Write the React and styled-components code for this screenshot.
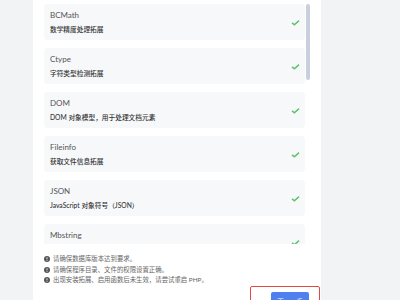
import React from 'react'
import styled, { createGlobalStyle } from 'styled-components'

const Global = createGlobalStyle`
  html, body {
    margin: 0;
    padding: 0;
    background: #f2f3f5;
    font-family: Lato, "Noto Sans CJK SC", sans-serif;
  }
`

const Page = styled.div`
  display: flex;
  height: 300px;
  padding: 0 79px 0 33px;
  background: #f2f3f5;
  overflow: hidden;
`

const Panel = styled.div`
  flex: 1;
  display: flex;
  flex-direction: column;
  background: #fff;
  padding: 0 11px;
`

const ListWrap = styled.div`
  position: relative;
  flex: none;
  height: 244px;
`

const List = styled.div`
  height: 100%;
  overflow: hidden;
  display: flex;
  flex-direction: column;
  gap: 8px;
  padding: 4px 5px 0 0;
  box-sizing: border-box;
`

const Thumb = styled.div`
  position: absolute;
  top: 4px;
  right: 0;
  width: 4px;
  height: 76px;
  border-radius: 2px;
  background: #c9cfdc;
`

const Card = styled.div`
  flex: none;
  display: flex;
  align-items: center;
  justify-content: space-between;
  height: 36px;
  box-sizing: border-box;
  padding: 0 5px 0 6px;
  background: #f7f8fa;
  border-radius: 4px;
`

const Info = styled.div`
  display: flex;
  flex-direction: column;
  gap: 5px;
`

const Title = styled.div`
  font-size: 8px;
  line-height: 10px;
  color: #555;
`

const Desc = styled.div`
  font-size: 6.7px;
  line-height: 9px;
  font-weight: 500;
  color: #333;
`

const Notes = styled.ul`
  flex: none;
  list-style: none;
  margin: 10px 0 0;
  padding: 0;
`

const Note = styled.li`
  display: flex;
  align-items: center;
  gap: 3px;
  font-size: 6.4px;
  line-height: 10.5px;
  color: #666;
`

const Footer = styled.div`
  flex: none;
  display: flex;
  justify-content: flex-end;
  margin: 0 -10px 0 0;
`

const Highlight = styled.div`
  width: 70px;
  height: 30px;
  box-sizing: border-box;
  border: 1px solid #e5483f;
  border-radius: 2px;
  display: flex;
  justify-content: flex-end;
  padding: 5px 10px 0 0;
`

const Button = styled.button`
  width: 38px;
  height: 18px;
  border: none;
  border-radius: 2px;
  background: #4f80f0;
  color: #fff;
  font-family: "Noto Sans CJK SC", sans-serif;
  font-size: 6.5px;
  letter-spacing: 3px;
  padding: 0 0 0 3px;
`

const Check = () => (
  <svg width="9" height="7" viewBox="0 0 9 7">
    <polyline points="1,3.8 3.4,5.8 8,1.6" fill="none" stroke="#5ec46e" strokeWidth="1.5" />
  </svg>
)

const Alert = () => (
  <svg width="6" height="6" viewBox="0 0 6 6">
    <circle cx="3" cy="3" r="3" fill="#555" />
    <rect x="2.6" y="1.2" width="0.8" height="2.2" fill="#fff" />
    <rect x="2.6" y="4" width="0.8" height="0.8" fill="#fff" />
  </svg>
)

const extensions = [
  ['BCMath', '数学精度处理拓展'],
  ['Ctype', '字符类型检测拓展'],
  ['DOM', 'DOM 对象模型，用于处理文档元素'],
  ['Fileinfo', '获取文件信息拓展'],
  ['JSON', 'JavaScript 对象符号（JSON）'],
  ['Mbstring', '多字节字符串处理拓展'],
]

const notes = [
  '请确保数据库版本达到要求。',
  '请确保程序目录、文件的权限设置正确。',
  '出现安装拓展、启用函数后未生效，请尝试重启 PHP。',
]

export default function App() {
  return (
    <>
      <Global />
      <Page>
        <Panel>
          <ListWrap>
            <List>
              {extensions.map(([name, desc]) => (
                <Card key={name}>
                  <Info>
                    <Title>{name}</Title>
                    <Desc>{desc}</Desc>
                  </Info>
                  <Check />
                </Card>
              ))}
            </List>
            <Thumb />
          </ListWrap>
          <Notes>
            {notes.map((n) => (
              <Note key={n}>
                <Alert />
                {n}
              </Note>
            ))}
          </Notes>
          <Footer>
            <Highlight>
              <Button>下一步</Button>
            </Highlight>
          </Footer>
        </Panel>
      </Page>
    </>
  )
}
